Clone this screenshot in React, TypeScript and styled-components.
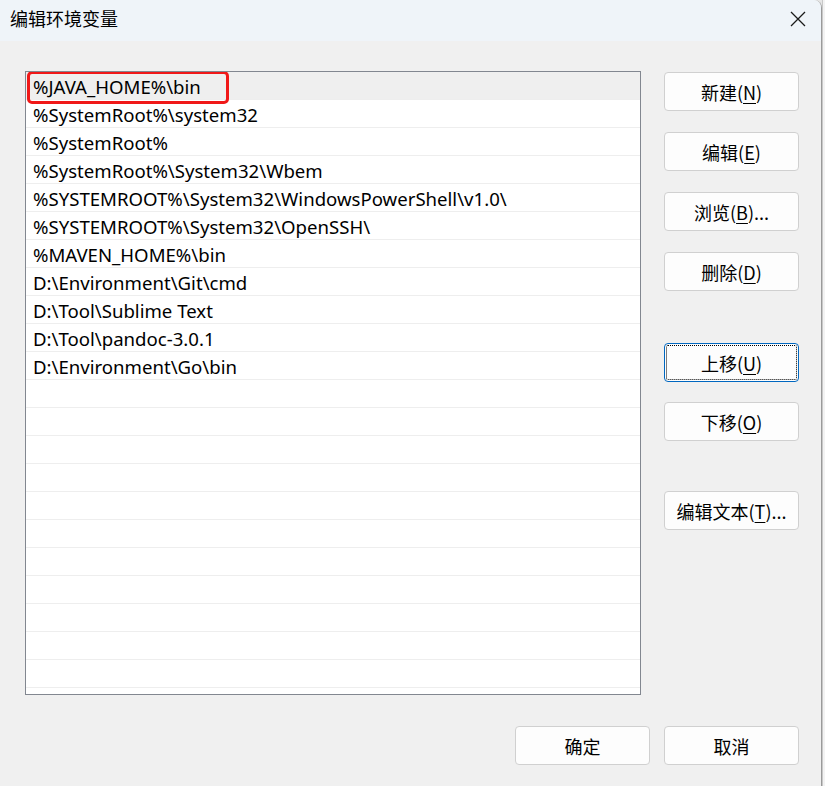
import React from 'react';
import styled, { createGlobalStyle } from 'styled-components';

const GlobalStyle = createGlobalStyle`
  html, body {
    margin: 0;
    padding: 0;
    background: #e6e6e6;
  }
  body {
    font-family: "Noto Sans", "Noto Sans CJK SC", sans-serif;
    color: #000;
  }
`;

const paths = [
  '%JAVA_HOME%\\bin',
  '%SystemRoot%\\system32',
  '%SystemRoot%',
  '%SystemRoot%\\System32\\Wbem',
  '%SYSTEMROOT%\\System32\\WindowsPowerShell\\v1.0\\',
  '%SYSTEMROOT%\\System32\\OpenSSH\\',
  '%MAVEN_HOME%\\bin',
  'D:\\Environment\\Git\\cmd',
  'D:\\Tool\\Sublime Text',
  'D:\\Tool\\pandoc-3.0.1',
  'D:\\Environment\\Go\\bin',
];

const TOTAL_ROWS = 22;

const Screen = styled.div`
  display: flex;
  width: 825px;
  height: 786px;
  overflow: hidden;
`;

const Window = styled.div`
  width: 822px;
  height: 786px;
  display: flex;
  flex-direction: column;
  background: #f0f0f0;
  border-right: 1px solid #9a9a9a;
  border-top-right-radius: 8px;
  box-sizing: border-box;
  overflow: hidden;
`;

const BehindStrip = styled.div`
  flex: 1;
  background: #f3f3f3;
  border-left: 1px solid #c8c8c8;
`;

const TitleBar = styled.div`
  height: 41px;
  flex-shrink: 0;
  display: flex;
  align-items: center;
  justify-content: space-between;
  padding: 0 0 0 10px;
  background: #eff4f9;
`;

const Title = styled.span`
  font-family: "Noto Sans CJK SC", sans-serif;
  font-size: 18px;
  margin-top: -5px;
`;

const CloseButton = styled.div`
  width: 46px;
  height: 41px;
  display: flex;
  align-items: center;
  justify-content: center;
  margin-top: -4px;
`;

const Body = styled.div`
  flex: 1;
  display: flex;
  flex-direction: column;
  padding: 30px 0 0 25px;
`;

const Main = styled.div`
  display: flex;
  gap: 23px;
`;

const ListBox = styled.div`
  width: 616px;
  height: 624px;
  box-sizing: border-box;
  border: 1px solid #828790;
  background: #fff;
  overflow: hidden;
`;

const Row = styled.div<{ $selected?: boolean }>`
  position: relative;
  height: 28px;
  box-sizing: border-box;
  padding: 2px 0 0 7px;
  display: flex;
  align-items: center;
  font-size: 18.6px;
  white-space: nowrap;
  background: ${p => (p.$selected ? '#efefef' : '#fff')};
  border-bottom: 1px solid #eeeeee;
`;

const Highlight = styled.div`
  position: absolute;
  z-index: 1;
  left: 1px;
  top: -1px;
  width: 202px;
  height: 33px;
  box-sizing: border-box;
  border: 3px solid #f01818;
  border-radius: 5px;
`;

const ButtonColumn = styled.div`
  display: flex;
  flex-direction: column;
  padding-top: 1px;
`;

const Button = styled.div<{ $gapBefore?: number; $focused?: boolean }>`
  position: relative;
  width: 135px;
  height: 39px;
  box-sizing: border-box;
  margin-top: ${p => p.$gapBefore ?? 0}px;
  display: flex;
  align-items: center;
  justify-content: center;
  background: #fdfdfd;
  border: 1px solid ${p => (p.$focused ? '#0067c0' : '#d0d0d0')};
  border-radius: 4px;
  font-family: "Noto Sans CJK SC", sans-serif;
  font-size: 18px;
  &::after {
    content: '';
    display: ${p => (p.$focused ? 'block' : 'none')};
    position: absolute;
    inset: 1px;
    border: 1px dotted #000;
    border-radius: 2px;
  }
`;

const Key = styled.span`
  text-decoration: underline;
  text-underline-offset: 3px;
`;

const Footer = styled.div`
  display: flex;
  justify-content: flex-end;
  gap: 14px;
  padding: 31px 22px 0 0;
`;

const Label: React.FC<{ text: string; hotkey?: string; tail?: string }> = ({ text, hotkey, tail }) => (
  <span>
    {text}
    {hotkey && (
      <>
        (<Key>{hotkey}</Key>)
      </>
    )}
    {tail}
  </span>
);

export default function App() {
  const rows = Array.from({ length: TOTAL_ROWS }, (_, i) => paths[i] ?? '');
  return (
    <Screen>
      <GlobalStyle />
      <Window>
        <TitleBar>
          <Title>编辑环境变量</Title>
          <CloseButton>
            <svg width="16" height="16" viewBox="0 0 16 16">
              <path d="M1 1 L15 15 M15 1 L1 15" stroke="#1a1a1a" strokeWidth="1.3" fill="none" />
            </svg>
          </CloseButton>
        </TitleBar>
        <Body>
          <Main>
            <ListBox>
              {rows.map((r, i) => (
                <Row key={i} $selected={i === 0}>
                  {r}
                  {i === 0 && <Highlight />}
                </Row>
              ))}
            </ListBox>
            <ButtonColumn>
              <Button><Label text="新建" hotkey="N" /></Button>
              <Button $gapBefore={21}><Label text="编辑" hotkey="E" /></Button>
              <Button $gapBefore={21}><Label text="浏览" hotkey="B" tail="..." /></Button>
              <Button $gapBefore={21}><Label text="删除" hotkey="D" /></Button>
              <Button $gapBefore={52} $focused><Label text="上移" hotkey="U" /></Button>
              <Button $gapBefore={20}><Label text="下移" hotkey="O" /></Button>
              <Button $gapBefore={50}><Label text="编辑文本" hotkey="T" tail="..." /></Button>
            </ButtonColumn>
          </Main>
          <Footer>
            <Button>确定</Button>
            <Button>取消</Button>
          </Footer>
        </Body>
      </Window>
      <BehindStrip />
    </Screen>
  );
}
